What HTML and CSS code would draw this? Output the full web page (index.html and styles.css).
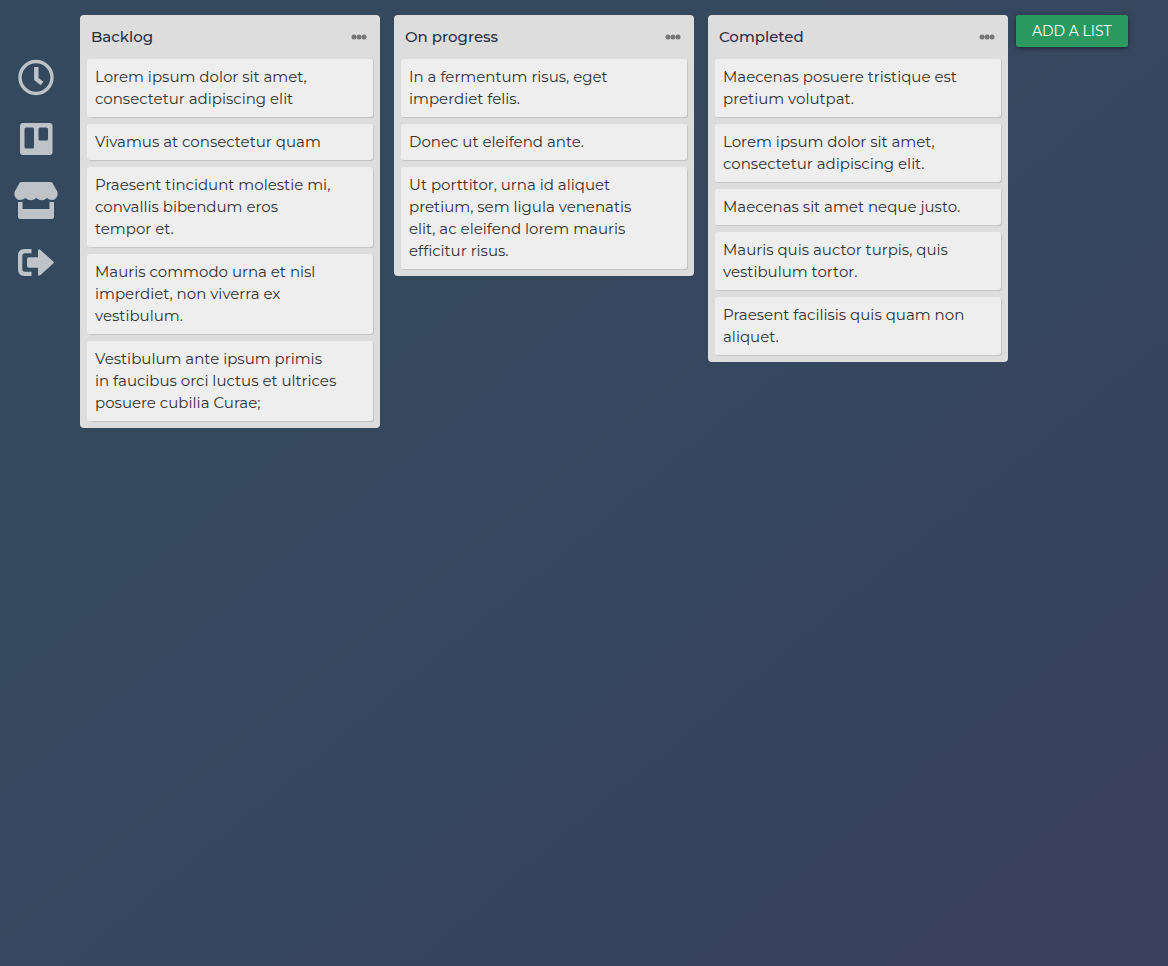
FILE: index.html
```html
<!DOCTYPE html>
<html lang="en">
<head>
<meta charset="utf-8">
<title>Board</title>
<link rel="stylesheet" href="styles.css">
</head>
<body>
<div class="app">
  <nav class="sidebar" aria-label="Main">
    <a href="#" aria-label="Recent">
      <svg viewBox="0 0 44 40"><circle cx="22" cy="20.500" r="16" fill="none" stroke="currentColor" stroke-width="3.400"/><path d="M22.300 10V22L28 26.500" fill="none" stroke="currentColor" stroke-width="4.400"/></svg>
    </a>
    <a href="#" aria-label="Boards">
      <svg viewBox="0 0 44 40"><path fill="currentColor" fill-rule="evenodd" d="M9 4H35.500A3 3 0 0 1 38.500 7V33A3 3 0 0 1 35.500 36H9A3 3 0 0 1 6 33V7A3 3 0 0 1 9 4ZM12 8.500A1.500 1.500 0 0 0 10.500 10V28A1.500 1.500 0 0 0 12 29.500H18.500A1.500 1.500 0 0 0 20 28V10A1.500 1.500 0 0 0 18.500 8.500ZM26 8.500A1.500 1.500 0 0 0 24.500 10V20A1.500 1.500 0 0 0 26 21.500H32.500A1.500 1.500 0 0 0 34 20V10A1.500 1.500 0 0 0 32.500 8.500Z"/></svg>
    </a>
    <a href="#" aria-label="Store">
      <svg viewBox="0 0 44 40"><path fill="currentColor" d="M7.500 1H36.500Q37.800 1 38.500 2.100L43 10Q44.500 13.500 42.500 16.500Q41 19 38 19Q35 19 33 17Q30.500 19.300 27.800 19.300Q25 19.300 22.300 17Q19.500 19.300 16.800 19.300Q14 19.300 11.500 17Q9 19 6 19Q3 19 1.500 16.500Q-0.500 13.500 1 10L5.500 2.100Q6.200 1 7.500 1Z"/><path fill="currentColor" d="M4 21Q6.500 21.300 8.500 20.700V28H35.500V20.700Q37.500 21.300 40 21V35.500Q40 38 37.500 38H6.500Q4 38 4 35.500Z"/></svg>
    </a>
    <a href="#" aria-label="Log out">
      <svg viewBox="0 0 44 40"><path fill="currentColor" d="M17.500 6H10.500Q4 6 4 12.500V26.500Q4 33 10.500 33H17.500V28.800H11Q8.300 28.800 8.300 26V13Q8.300 10.200 11 10.200H17.500Z"/><path fill="currentColor" d="M15 14.200H24V8Q24 5 26.500 7L39 18.300Q40.400 19.500 39 20.700L26.500 32Q24 34 24 31V24.800H15Q13 24.800 13 22.800V16.200Q13 14.200 15 14.200Z"/></svg>
    </a>
  </nav>
  <main class="board">
    <div class="lists">
      <section class="list">
        <header class="list-head"><h2>Backlog</h2><button class="more" aria-label="List menu"><svg viewBox="0 0 16 6"><circle cx="3" cy="3" r="2.500"/><circle cx="8" cy="3" r="2.500"/><circle cx="13" cy="3" r="2.500"/></svg></button></header>
        <p class="card">Lorem ipsum dolor sit amet,<br>consectetur adipiscing elit</p>
        <p class="card">Vivamus at consectetur quam</p>
        <p class="card">Praesent tincidunt molestie mi,<br>convallis bibendum eros<br>tempor et.</p>
        <p class="card">Mauris commodo urna et nisl<br>imperdiet, non viverra ex<br>vestibulum.</p>
        <p class="card">Vestibulum ante ipsum primis<br>in faucibus orci luctus et ultrices<br>posuere cubilia Curae;</p>
      </section>
      <section class="list">
        <header class="list-head"><h2>On progress</h2><button class="more" aria-label="List menu"><svg viewBox="0 0 16 6"><circle cx="3" cy="3" r="2.500"/><circle cx="8" cy="3" r="2.500"/><circle cx="13" cy="3" r="2.500"/></svg></button></header>
        <p class="card">In a fermentum risus, eget<br>imperdiet felis.</p>
        <p class="card">Donec ut eleifend ante.</p>
        <p class="card">Ut porttitor, urna id aliquet<br>pretium, sem ligula venenatis<br>elit, ac eleifend lorem mauris<br>efficitur risus.</p>
      </section>
      <section class="list">
        <header class="list-head"><h2>Completed</h2><button class="more" aria-label="List menu"><svg viewBox="0 0 16 6"><circle cx="3" cy="3" r="2.500"/><circle cx="8" cy="3" r="2.500"/><circle cx="13" cy="3" r="2.500"/></svg></button></header>
        <p class="card">Maecenas posuere tristique est<br>pretium volutpat.</p>
        <p class="card">Lorem ipsum dolor sit amet,<br>consectetur adipiscing elit.</p>
        <p class="card">Maecenas sit amet neque justo.</p>
        <p class="card">Mauris quis auctor turpis, quis<br>vestibulum tortor.</p>
        <p class="card">Praesent facilisis quis quam non<br>aliquet.</p>
      </section>
    </div>
    <button class="add">ADD A LIST</button>
  </main>
</div>
</body>
</html>
```
FILE: styles.css
```css
* { box-sizing: border-box; }
body {
  margin: 0;
  font-family: Montserrat, Inter, sans-serif;
  font-size: 15px;
  line-height: 22px;
  color: #333;
}
.app {
  display: flex;
  min-height: 100vh;
  background: linear-gradient(to bottom right, #34495e 30%, #3a405e);
}
.sidebar {
  flex: none;
  display: flex;
  flex-direction: column;
  gap: 22px;
  width: 80px;
  padding: 57px 0 0 14px;
}
.sidebar a { width: 44px; height: 40px; color: #bdc3c7; }
.sidebar svg { display: block; width: 44px; height: 40px; }
.board {
  display: flex;
  align-items: flex-start;
  gap: 8px;
  padding-top: 15px;
}
.lists { display: flex; align-items: flex-start; gap: 14px; }
.list {
  display: flex;
  flex-direction: column;
  gap: 7px;
  width: 300px;
  padding: 0 7px 7px;
  background: #ddd;
  border-radius: 4px;
}
.list-head {
  display: flex;
  align-items: center;
  justify-content: space-between;
  height: 37px;
  padding: 7px 6px 0 4px;
}
.list-head h2 {
  margin: 0;
  font-size: 15px;
  font-weight: 500;
  color: #2c3045;
}
.more { padding: 0; border: 0; background: none; cursor: pointer; }
.more svg { display: block; width: 16px; height: 6px; fill: #777; }
.card {
  margin: 0;
  padding: 7px 8px;
  background: #eee;
  border-radius: 3px;
  box-shadow: 1px 1px 1px rgba(0, 0, 0, 0.12);
  white-space: nowrap;
}
.add {
  height: 32px;
  padding: 0 16px;
  border: 0;
  border-radius: 2px;
  background: #2b9960;
  box-shadow: 0 1px 4px rgba(0, 0, 0, 0.5);
  color: #fff;
  font: 14px/32px Montserrat, Inter, sans-serif;
  white-space: nowrap;
  cursor: pointer;
}
```
